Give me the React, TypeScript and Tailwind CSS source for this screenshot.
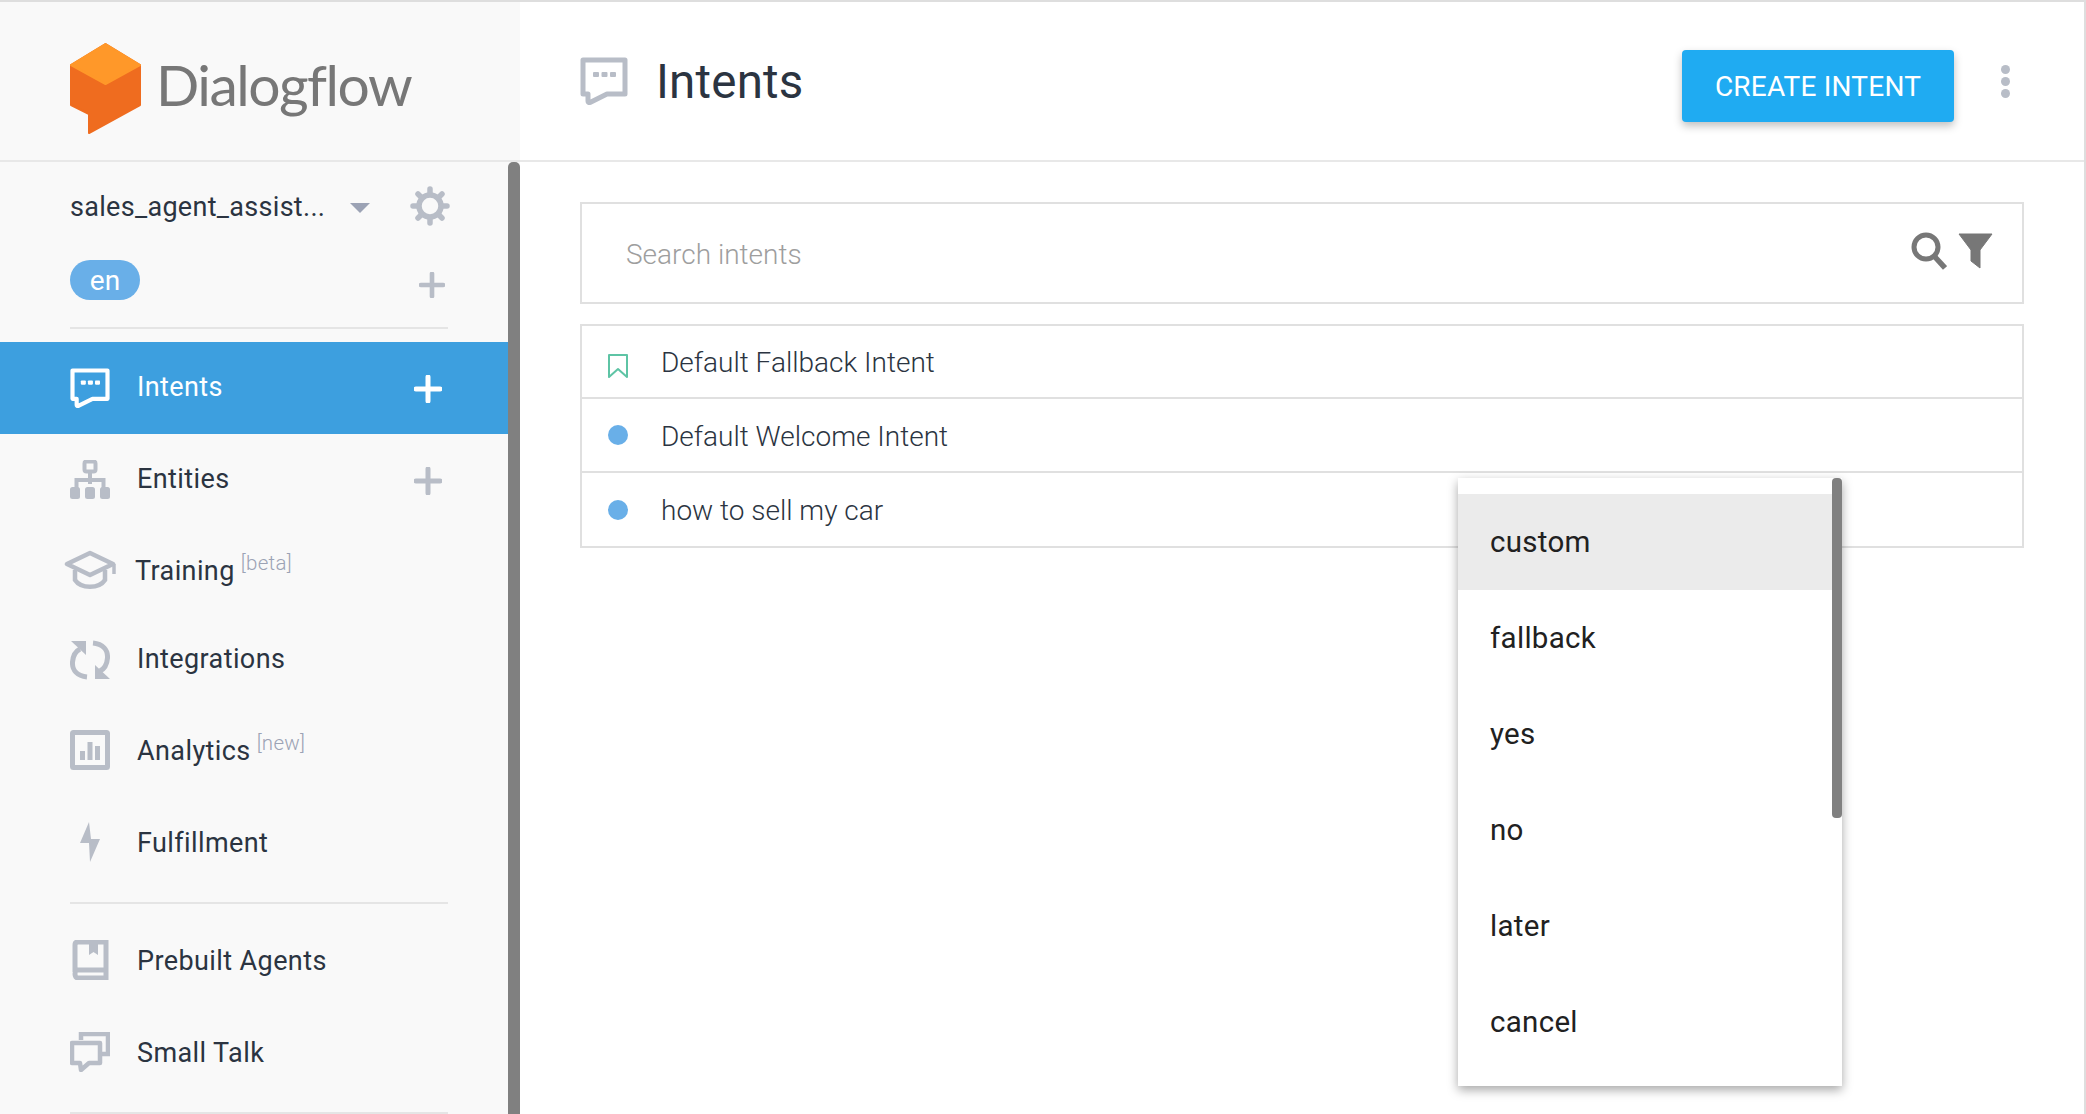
import React from 'react';

const ChatIcon = ({ className }: { className: string }) => (
  <svg viewBox="0 0 48 48" className={className}>
    <path d="M3 3H45V37H27L10 45.5C8.5 46 8 45 8 44V37H3Z" fill="none" stroke="currentColor" strokeWidth="5" strokeLinejoin="round" />
    <rect x="13" y="15" width="6" height="5" rx="1" fill="currentColor" />
    <rect x="21.5" y="15" width="6" height="5" rx="1" fill="currentColor" />
    <rect x="30" y="15" width="6" height="5" rx="1" fill="currentColor" />
  </svg>
);

const EntitiesIcon = () => (
  <svg viewBox="0 0 40 40" className="w-[40px] h-[40px] text-[#b8bdc7]">
    <rect x="14.5" y="1.5" width="11" height="10" rx="2" fill="none" stroke="currentColor" strokeWidth="4" />
    <path d="M20 11V24M6.5 28V20H33.5V28" fill="none" stroke="currentColor" strokeWidth="4" />
    <rect x="0" y="27" width="10" height="12" rx="2.5" fill="currentColor" />
    <rect x="15" y="27" width="10" height="12" rx="2.5" fill="currentColor" />
    <rect x="30" y="27" width="10" height="12" rx="2.5" fill="currentColor" />
  </svg>
);

const TrainingIcon = () => (
  <svg viewBox="0 0 52 40" className="w-[52px] h-[40px] text-[#b8bdc7]">
    <path d="M3 14L26 3L49 14L26 25Z" fill="none" stroke="currentColor" strokeWidth="4.5" strokeLinejoin="round" />
    <path d="M11 20V30C17 39 35 39 41 30V20" fill="none" stroke="currentColor" strokeWidth="4.5" />
    <path d="M50 14V24" stroke="currentColor" strokeWidth="3.5" />
  </svg>
);

const IntegrationsIcon = () => (
  <svg viewBox="0 0 40 40" className="w-[40px] h-[40px] text-[#b8bdc7]">
    <path d="M17 37C7 36 2 30 2.5 22C3 16 6 11 10 9" fill="none" stroke="currentColor" strokeWidth="5" />
    <path d="M1 1H16V15Z" fill="currentColor" />
    <path d="M23 3C33 4 38 10 37.5 18C37 24 34 29 30 31" fill="none" stroke="currentColor" strokeWidth="5" />
    <path d="M40 39H25V25Z" fill="currentColor" />
  </svg>
);

const AnalyticsIcon = () => (
  <svg viewBox="0 0 40 40" className="w-[40px] h-[40px] text-[#b8bdc7]">
    <rect x="2.5" y="2.5" width="35" height="35" rx="1" fill="none" stroke="currentColor" strokeWidth="5" />
    <rect x="10" y="21" width="5" height="9" fill="currentColor" />
    <rect x="17.5" y="12" width="5" height="18" fill="currentColor" />
    <rect x="25" y="16" width="5" height="14" fill="currentColor" />
  </svg>
);

const BoltIcon = () => (
  <svg viewBox="0 0 40 40" className="w-[40px] h-[40px] text-[#b8bdc7]">
    <path d="M19 0L10 21H19L20 40L30 17H21Z" fill="currentColor" />
  </svg>
);

const BookIcon = () => (
  <svg viewBox="0 0 40 40" className="w-[40px] h-[40px] text-[#b8bdc7]">
    <path d="M5 32V5C5 3 6 2 8 2H36V38H8C6 38 5 36 5 34C5 31 6 30 8 30H36" fill="none" stroke="currentColor" strokeWidth="5" />
    <path d="M19 3H28V15L23.5 12L19 15Z" fill="currentColor" />
  </svg>
);

const SmallTalkIcon = () => (
  <svg viewBox="0 0 40 40" className="w-[40px] h-[40px] text-[#b8bdc7]">
    <path d="M11 8V2H38V22H32" fill="none" stroke="currentColor" strokeWidth="4.5" />
    <path d="M2 11H30V31H19L11 38L10 31H2Z" fill="none" stroke="currentColor" strokeWidth="4.5" strokeLinejoin="round" />
  </svg>
);

const GearIcon = () => (
  <svg viewBox="0 0 40 40" className="ml-auto w-[40px] h-[40px] shrink-0 text-[#b8bdc7]">
    <circle cx="20" cy="20" r="11" fill="none" stroke="currentColor" strokeWidth="5.5" />
    <path
      d="M20 3V8M20 32V37M3 20H8M32 20H37M8 8L11.5 11.5M28.5 28.5L32 32M32 8L28.5 11.5M11.5 28.5L8 32"
      stroke="currentColor"
      strokeWidth="5.5"
      strokeLinecap="round"
    />
  </svg>
);

const navTop = [
  { label: 'Entities', icon: <EntitiesIcon />, plus: true, rowClass: 'h-[91px]', textClass: 'ml-[27px]' },
  { label: 'Training', tag: '[beta]', icon: <TrainingIcon />, rowClass: 'h-[90px] -ml-[6px]', textClass: 'ml-[19px] mt-[2px]' },
  { label: 'Integrations', icon: <IntegrationsIcon />, rowClass: 'h-[89px]', textClass: 'ml-[27px]' },
  { label: 'Analytics', tag: '[new]', icon: <AnalyticsIcon />, rowClass: 'h-[92px]', textClass: 'ml-[27px] mt-[2px]' },
  { label: 'Fulfillment', icon: <BoltIcon />, rowClass: 'h-[92px]', textClass: 'ml-[27px] mt-[2px]' },
];

const tags = ['custom', 'fallback', 'yes', 'no', 'later', 'cancel'];

const intents = [
  { name: 'Default Welcome Intent', rowClass: 'h-[74px]', textClass: 'mt-[3px]' },
  { name: 'how to sell my car', rowClass: 'h-[73px]', textClass: 'mt-[2px]' },
];

const Plus = ({ className }: { className: string }) => (
  <svg viewBox="0 0 28 28" className={className}>
    <path d="M14 2V26M2 14H26" stroke="currentColor" strokeWidth="5" strokeLinecap="round" />
  </svg>
);

export default function App() {
  return (
    <div className="relative flex w-[2086px] h-[1114px] overflow-hidden border-t-2 border-[#dedede] bg-white font-[Roboto,sans-serif]">
      {/* sidebar */}
      <aside className="flex flex-col w-[520px] shrink-0 bg-[#f9f9f9]">
        <div className="flex items-center h-[160px] shrink-0 pl-[70px] pb-[2px] border-b-2 border-[#e8e8e8]">
          <svg viewBox="0 0 71 91" className="w-[71px] h-[91px] mt-[17px]">
            <path d="M35.5 1L70 22V62L19 90V71L1 62V22Z" fill="#ef6c1f" stroke="#ef6c1f" strokeWidth="2" strokeLinejoin="round" />
            <path d="M35.5 1L70 22L35.5 41L1 22Z" fill="#ff9829" stroke="#ff9829" strokeWidth="2" strokeLinejoin="round" />
          </svg>
          <span className="ml-[15px] mt-[9px] text-[57px] tracking-[-1.5px] text-[#777777] font-[Lato,sans-serif]">Dialogflow</span>
        </div>

        <div className="flex flex-1 min-h-0">
          <div className="flex-1 min-w-0 pt-[24px]">
            <div className="flex items-center h-[40px] pl-[70px] pr-[58px]">
              <span className="mt-[2px] text-[27px] tracking-[0.3px] text-[#2b3441]">sales_agent_assist...</span>
              <span className="ml-[25px] mt-[3px] w-0 h-0 border-x-[10px] border-t-[10px] border-x-transparent border-t-[#9ca3b5]" />
              <GearIcon />
            </div>

            <div className="flex items-center justify-between h-[40px] mt-[34px] pl-[70px] pr-[63px]">
              <span className="flex items-center justify-center w-[70px] h-[40px] pt-[2px] rounded-full bg-[#69afe8] text-[28px] text-white">en</span>
              <Plus className="w-[26px] h-[26px] mt-[10px] text-[#b8bdc7]" />
            </div>

            <div className="h-[2px] mt-[27px] ml-[70px] mr-[60px] bg-[#e5e5e5]" />

            <div className="flex items-center h-[92px] mt-[13px] pl-[70px] pr-[66px] bg-[#3d9fdf] text-white">
              <ChatIcon className="w-[40px] h-[40px] text-white" />
              <span className="ml-[27px] mb-[2px] text-[27px] tracking-[0.4px]">Intents</span>
              <Plus className="ml-auto mt-[2px] w-[28px] h-[28px] text-white" />
            </div>

            {navTop.map((item) => (
              <div key={item.label} className={`flex items-center pl-[70px] pr-[66px] ${item.rowClass}`}>
                {item.icon}
                <span className={`text-[27px] tracking-[0.4px] text-[#2b3441] ${item.textClass}`}>{item.label}</span>
                {item.tag && <span className="ml-[6px] mb-[14px] text-[20.5px] tracking-[0.3px] text-[#9ca3b5] font-light">{item.tag}</span>}
                {item.plus && <Plus className="ml-auto mt-[2px] w-[28px] h-[28px] text-[#b8bdc7]" />}
              </div>
            ))}

            <div className="h-[2px] mt-[14px] ml-[70px] mr-[60px] bg-[#e5e5e5]" />

            <div className="flex items-center h-[92px] mt-[10px] pl-[70px]">
              <BookIcon />
              <span className="ml-[27px] mt-[2px] text-[27px] tracking-[0.4px] text-[#2b3441]">Prebuilt Agents</span>
            </div>
            <div className="flex items-center h-[92px] pl-[70px]">
              <SmallTalkIcon />
              <span className="ml-[27px] mt-[2px] text-[27px] tracking-[0.4px] text-[#2b3441]">Small Talk</span>
            </div>
            <div className="h-[2px] mt-[14px] ml-[70px] mr-[60px] bg-[#e5e5e5]" />
          </div>
          <div className="w-[12px] shrink-0 bg-[#808080] rounded-t-[5px]" />
        </div>
      </aside>

      {/* main */}
      <main className="flex flex-col flex-1 min-w-0 border-r-2 border-[#dedede]">
        <header className="flex items-center h-[160px] shrink-0 pl-[60px] pr-[130px] pb-[2px] border-b-2 border-[#e8e8e8]">
          <ChatIcon className="w-[48px] h-[48px] mt-[1px] text-[#b8bdc7]" />
          <h1 className="ml-[28px] mt-[5px] text-[47.5px] leading-none tracking-[0.2px] text-[#2b3441]">Intents</h1>
          <button className="ml-auto w-[272px] h-[72px] mt-[12px] pt-[2px] rounded-[4px] bg-[#1fabf2] text-[28px] tracking-[0.2px] text-white shadow-[0_4px_8px_rgba(0,0,0,0.25)]">CREATE INTENT</button>
          <div className="relative w-0 self-stretch">
            <div className="absolute left-[47px] top-[63px] flex flex-col gap-[3px]">
              <span className="w-[9px] h-[9px] rounded-full bg-[#b8bdc7]" />
              <span className="w-[9px] h-[9px] rounded-full bg-[#b8bdc7]" />
              <span className="w-[9px] h-[9px] rounded-full bg-[#b8bdc7]" />
            </div>
          </div>
        </header>

        <div className="pt-[40px] pl-[60px] pr-[60px]">
          <div className="flex items-center h-[102px] pl-[44px] pr-[29px] border-2 border-[#e0e0e0]">
            <input
              placeholder="Search intents"
              className="flex-1 min-w-0 mt-[4px] text-[28px] font-light text-[#2b3441] placeholder:text-[#9e9e9e] outline-none"
            />
            <svg viewBox="0 0 36 38" className="w-[36px] h-[38px] text-[#777777] mt-[-4px]">
              <circle cx="15" cy="15" r="12" fill="none" stroke="currentColor" strokeWidth="5" />
              <path d="M24 25L34 36" stroke="currentColor" strokeWidth="5.5" />
            </svg>
            <svg viewBox="0 0 35 36" className="ml-[11px] w-[35px] h-[36px] text-[#777777] mt-[-4px]">
              <path d="M1 1H34L22 17V35L13 28V17Z" fill="currentColor" stroke="currentColor" strokeWidth="1" strokeLinejoin="round" />
            </svg>
          </div>

          <div className="mt-[20px] border-2 border-[#e0e0e0] divide-y-2 divide-[#e0e0e0]">
            <div className="flex items-center h-[73px] pl-[26px] text-[28px] font-light text-[#2b3441]">
              <svg viewBox="0 0 20 24" className="w-[20px] h-[24px] mt-[8px] text-[#5ec4a5]">
                <path d="M1 1H19V23L10 15L1 23Z" fill="none" stroke="currentColor" strokeWidth="2" strokeLinejoin="round" />
              </svg>
              <span className="ml-[33px] mt-[3px]">Default Fallback Intent</span>
            </div>
            {intents.map((row) => (
              <div key={row.name} className={`flex items-center pl-[26px] text-[28px] font-light text-[#2b3441] ${row.rowClass}`}>
                <span className="w-[20px] h-[20px] rounded-full bg-[#69afe8]" />
                <span className={`ml-[33px] ${row.textClass}`}>{row.name}</span>
              </div>
            ))}
          </div>
        </div>
      </main>

      {/* tag suggestions popup */}
      <div className="absolute left-[1458px] top-[476px] flex w-[384px] h-[608px] bg-white shadow-[0_4px_10px_rgba(0,0,0,0.35)]">
        <ul className="flex-1 min-w-0 pt-[16px]">
          {tags.map((tag, i) => (
            <li key={tag} className={`flex items-center h-[96px] pl-[32px] text-[29.5px] tracking-[0.3px] text-[#212121] ${i === 0 ? 'bg-[#ebebeb]' : ''}`}>
              {tag}
            </li>
          ))}
        </ul>
        <div className="w-[10px] shrink-0">
          <div className="h-[340px] bg-[#808080] rounded-[4px]" />
        </div>
      </div>
    </div>
  );
}
